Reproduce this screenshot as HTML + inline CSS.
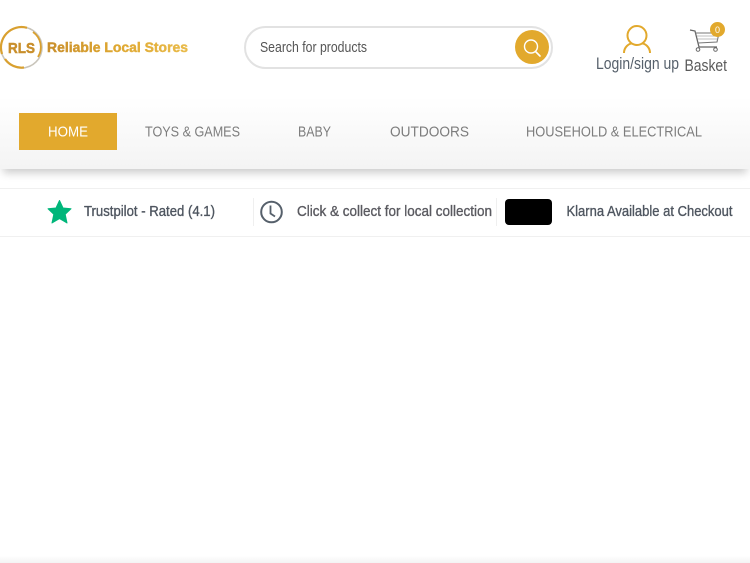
<!DOCTYPE html>
<html lang="en">
<head>
<meta charset="utf-8">
<title>Reliable Local Stores</title>
<style>
html,body{margin:0;padding:0;background:#fff;width:750px;height:563px;overflow:hidden}
svg{display:block;position:absolute;left:0;top:0}
text{font-family:"Liberation Sans",sans-serif}
.nav{position:absolute;left:0;top:97px;width:750px;height:72px;background:linear-gradient(#fff,#f4f4f4);box-shadow:0 7px 8px -3px rgba(0,0,0,.2)}
.bottom{position:absolute;left:0;top:556px;width:750px;height:7px;background:linear-gradient(#fff,#f3f3f3)}
</style>
</head>
<body>
<div class="nav"></div>
<div class="bottom"></div>
<svg width="750" height="563" viewBox="0 0 750 563" xmlns="http://www.w3.org/2000/svg">
  <defs>
    <linearGradient id="g" x1="0" x2="1" y1="0" y2="0">
      <stop offset="0" stop-color="#c98f2c"/><stop offset=".5" stop-color="#dfa832"/><stop offset="1" stop-color="#e9bb4a"/>
    </linearGradient>
  </defs>

  <!-- logo -->
  <circle cx="21.500" cy="47.500" r="20.500" fill="none" stroke="#c9c5bb" stroke-width="1.600"/>
  <path d="M2 54A20.500 20.500 0 0 1 27 27.800" fill="none" stroke="#d9a02f" stroke-width="2.200"/>
  <path d="M5 59A20 20 0 0 0 24 67.500" fill="none" stroke="#d9a02f" stroke-width="2.200"/>
  <path d="M33 32A18.500 18.500 0 0 1 38 57" fill="none" stroke="#d9a02f" stroke-width="1.800"/>
  <text x="8" y="53" font-size="15" font-weight="700" fill="#c98f2c" stroke="#c98f2c" stroke-width=".5" textLength="27" lengthAdjust="spacingAndGlyphs">RLS</text>
  <text x="47" y="52" font-size="14" font-weight="700" fill="url(#g)" stroke="url(#g)" stroke-width=".45" textLength="141" lengthAdjust="spacingAndGlyphs">Reliable Local Stores</text>

  <!-- search -->
  <rect x="245" y="27" width="307" height="41" rx="20.500" fill="#fff" stroke="#e2e2e2" stroke-width="2"/>
  <text x="260" y="52" font-size="14.500" fill="#555" textLength="107" lengthAdjust="spacingAndGlyphs">Search for products</text>
  <circle cx="532" cy="47" r="17" fill="#e2a92d"/>
  <circle cx="531" cy="46.500" r="6.500" fill="none" stroke="#fff" stroke-width="1.400"/>
  <path d="M535.500 51.500L540 56" stroke="#fff" stroke-width="1.600" stroke-linecap="round"/>

  <!-- user -->
  <circle cx="637" cy="35.500" r="9.500" fill="none" stroke="#e2a92d" stroke-width="2"/>
  <path d="M624 53C624 47 629 43.500 632 43.500M650 53C650 47 645 43.500 642 43.500" fill="none" stroke="#e2a92d" stroke-width="2"/>
  <text x="596" y="69" font-size="16.500" fill="#56606b" textLength="83" lengthAdjust="spacingAndGlyphs">Login/sign up</text>

  <!-- cart -->
  <path d="M690 30L695 31L699 47H717" fill="none" stroke="#666" stroke-width="1.300"/>
  <path d="M695 33H719L717 42L698 43" fill="none" stroke="#777" stroke-width="1.100"/>
  <path d="M697 36H718M697.500 39H717.500" fill="none" stroke="#aaa" stroke-width=".8"/>
  <circle cx="698" cy="49.500" r="1.800" fill="none" stroke="#666" stroke-width="1"/>
  <circle cx="715.500" cy="49.500" r="1.800" fill="none" stroke="#666" stroke-width="1"/>
  <circle cx="717.500" cy="29.500" r="7.500" fill="#e2a92d"/>
  <text x="717.500" y="33" font-size="9" fill="#fff" text-anchor="middle">0</text>
  <text x="684.500" y="71" font-size="16.500" fill="#5a5a5a" textLength="42.500" lengthAdjust="spacingAndGlyphs">Basket</text>

  <!-- nav -->
  <rect x="19" y="113" width="98" height="37" fill="#e2a92d"/>
  <g font-size="15">
    <text x="48" y="136.500" fill="#fff" textLength="40" lengthAdjust="spacingAndGlyphs">HOME</text>
    <text x="145" y="136.500" fill="#7d7d7d" textLength="95" lengthAdjust="spacingAndGlyphs">TOYS &amp; GAMES</text>
    <text x="298" y="136.500" fill="#7d7d7d" textLength="33" lengthAdjust="spacingAndGlyphs">BABY</text>
    <text x="390" y="136.500" fill="#7d7d7d" textLength="79" lengthAdjust="spacingAndGlyphs">OUTDOORS</text>
    <text x="526" y="136.500" fill="#7d7d7d" textLength="176" lengthAdjust="spacingAndGlyphs">HOUSEHOLD &amp; ELECTRICAL</text>
  </g>

  <!-- trust bar -->
  <rect x="0" y="188" width="750" height="1" fill="#f0f0f0"/>
  <rect x="0" y="236" width="750" height="1" fill="#f0f0f0"/>
  <rect x="253" y="198" width="1" height="28" fill="#efefef"/>
  <rect x="496" y="198" width="1" height="28" fill="#efefef"/>
  <path d="M59.500 200.500L63 208L71 208.800L65.200 214.300L67 223L59.500 218.600L52 223L53.800 214.300L48 208.800L56 208Z" fill="#00b67a" stroke="#00b67a" stroke-width="1" stroke-linejoin="round"/>
  <g font-size="15" stroke-width=".35">
    <text x="84" y="216" fill="#4f5660" stroke="#4f5660" textLength="131" lengthAdjust="spacingAndGlyphs">Trustpilot - Rated (4.1)</text>
    <text x="297" y="216" fill="#5a5a60" stroke="#5a5a60" textLength="195" lengthAdjust="spacingAndGlyphs">Click &amp; collect for local collection</text>
    <text x="566.500" y="216" fill="#4f5660" stroke="#4f5660" textLength="166" lengthAdjust="spacingAndGlyphs">Klarna Available at Checkout</text>
  </g>
  <circle cx="271.500" cy="212" r="10.300" fill="none" stroke="#56606b" stroke-width="2"/>
  <path d="M270.500 205.500V213.500L275 216.500" fill="none" stroke="#56606b" stroke-width="1.800"/>
  <rect x="505" y="199" width="47" height="26" rx="4" fill="#000"/>
</svg>
</body>
</html>
